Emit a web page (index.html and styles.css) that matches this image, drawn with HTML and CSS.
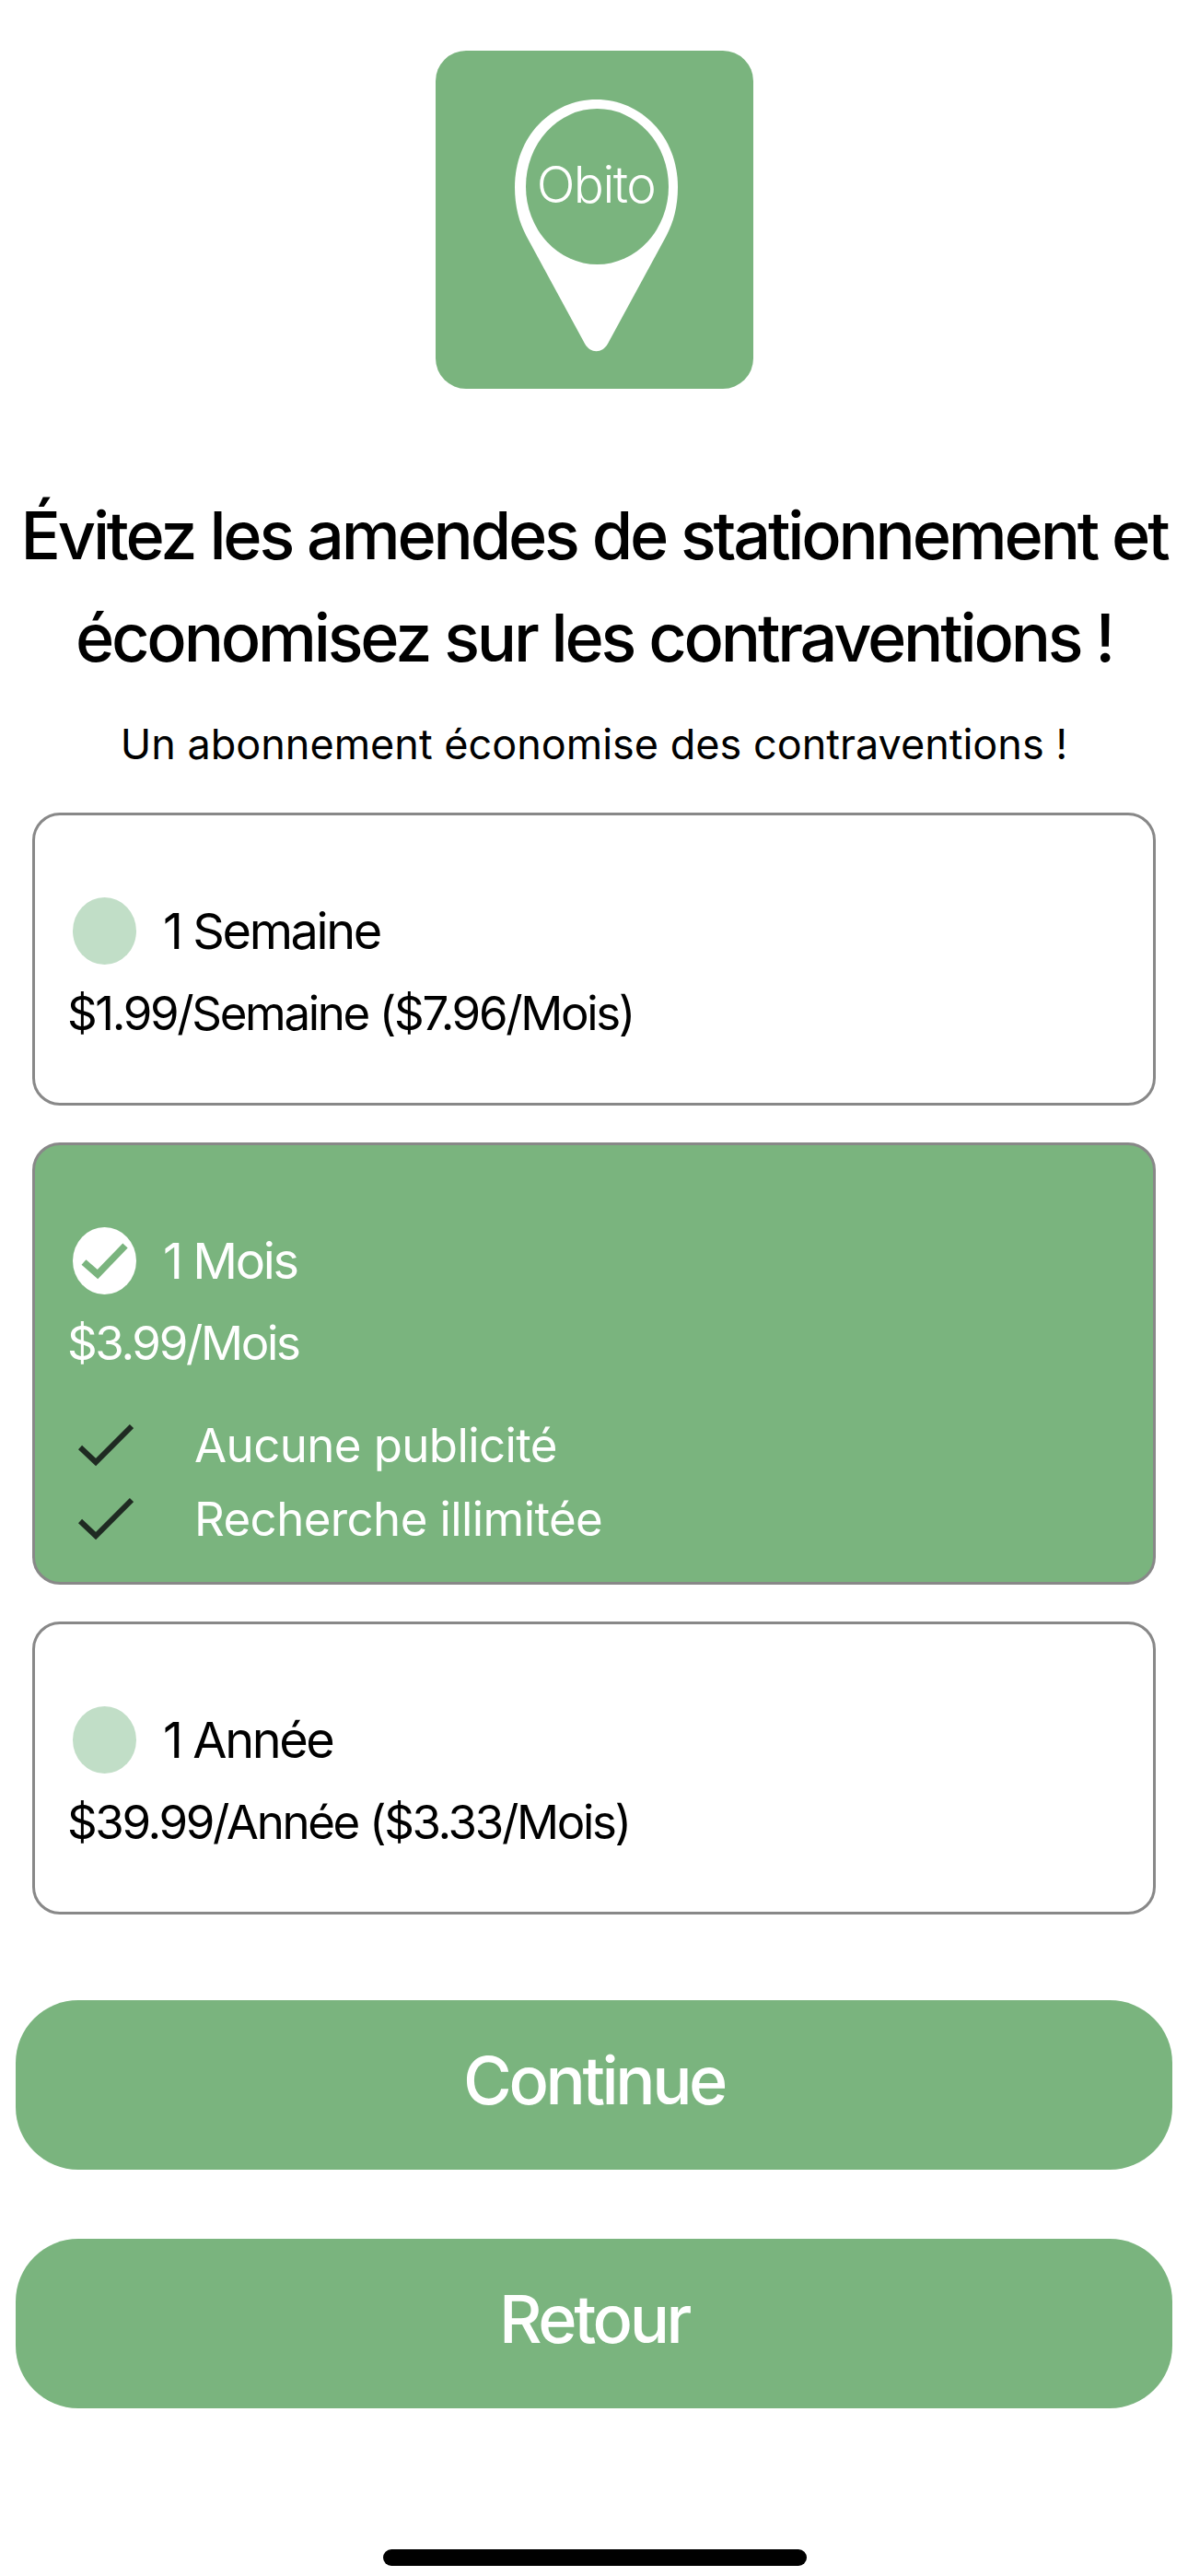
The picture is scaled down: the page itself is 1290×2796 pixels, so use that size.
FILE: index.html
```html
<!DOCTYPE html>
<html lang="fr">
<head>
    <meta charset="UTF-8">
    <meta name="viewport" content="width=device-width, initial-scale=1.0">
    <title>Obito - Abonnement</title>
    <link rel="stylesheet" href="styles.css">
</head>
<body>

    <div class="page">
        <svg class="logo" viewBox="0 0 345 367" width="345" height="367">
            <rect width="345" height="367" rx="33" fill="#7ab47e"/>
            <path fill="#fff" d="M174.5 53C223 53 263 93 263 148C263 170 258 187 250 202L187 318C181 329 168 329 162 318L99 202C91 187 86 170 86 148C86 93 126 53 174.5 53Z"/>
            <ellipse cx="175.5" cy="147.5" rx="77.5" ry="84.5" fill="#7ab47e"/>
            <text class="logo-text" x="174" y="165" text-anchor="middle">Obito</text>
        </svg>

        <h1 class="title">Évitez les amendes de stationnement et<br>économisez sur les contraventions !</h1>
        <p class="subtitle">Un abonnement économise des contraventions !</p>

        <div class="plans">
            <div class="plan">
                <div class="plan-head">
                    <span class="radio"></span>
                    <span>1 Semaine</span>
                </div>
                <div class="plan-price">$1.99/Semaine ($7.96/Mois)</div>
            </div>

            <div class="plan selected">
                <div class="plan-head">
                    <span class="radio">
                        <svg viewBox="0 0 69 73" width="69" height="73"><path d="M12 38L27 51L57 20" fill="none" stroke="#7ab47e" stroke-width="7.5"/></svg>
                    </span>
                    <span>1 Mois</span>
                </div>
                <div class="plan-price">$3.99/Mois</div>
                <ul class="features">
                    <li>
                        <svg viewBox="0 0 60 48" width="60" height="48"><path d="M2 27L19 43L58 4" fill="none" stroke="#1f2a22" stroke-width="6"/></svg>
                        <span>Aucune publicité</span>
                    </li>
                    <li>
                        <svg viewBox="0 0 60 48" width="60" height="48"><path d="M2 27L19 43L58 4" fill="none" stroke="#1f2a22" stroke-width="6"/></svg>
                        <span>Recherche illimitée</span>
                    </li>
                </ul>
            </div>

            <div class="plan">
                <div class="plan-head">
                    <span class="radio"></span>
                    <span>1 Année</span>
                </div>
                <div class="plan-price">$39.99/Année ($3.33/Mois)</div>
            </div>
        </div>

        <div class="actions">
            <button class="action">Continue</button>
            <button class="action">Retour</button>
        </div>
    </div>

    <div class="home-indicator"></div>

</body>
</html>
```

FILE: styles.css
```css
body {
    font-family: Inter, "Liberation Sans", sans-serif;
    margin: 0;
    background-color: #fff;
    color: #000;
}

.page {
    height: 2796px;
    box-sizing: border-box;
    padding-top: 55px;
    display: flex;
    flex-direction: column;
    align-items: center;
}

.logo {
    display: block;
    flex: none;
}

.logo-text {
    font-family: Inter, sans-serif;
    font-size: 55px;
    font-weight: 300;
    letter-spacing: -1.5px;
    fill: #fff;
}

.title {
    margin: 103px 0 0;
    font-size: 72px;
    font-weight: 500;
    letter-spacing: -3.2px;
    line-height: 111px;
    text-align: center;
    white-space: nowrap;
}

.subtitle {
    margin: 31px 0 0;
    font-size: 45px;
    line-height: 60px;
    text-align: center;
}

.plans {
    margin-top: 44px;
    width: 1220px;
    display: flex;
    flex-direction: column;
    gap: 40px;
}

.plan {
    box-sizing: border-box;
    height: 318px;
    padding: 88px 41px 0;
    border: 3px solid #888;
    border-radius: 30px;
}

.plan.selected {
    height: 480px;
    background-color: #7ab47e;
    color: #fff;
}

.plan-head {
    display: flex;
    align-items: center;
    gap: 29px;
    height: 74px;
    font-size: 54px;
    letter-spacing: -2.4px;
}

.radio {
    width: 69px;
    height: 73px;
    border-radius: 50%;
    background-color: #c1dec7;
    flex: none;
}

.selected .radio {
    background-color: #fff;
}

.radio svg {
    display: block;
}

.plan-price {
    margin: 23px 0 0 -6px;
    font-size: 51px;
    letter-spacing: -2.35px;
    line-height: 60px;
}

.features {
    list-style: none;
    margin: 50px 0 0;
    padding: 0;
    display: flex;
    flex-direction: column;
    gap: 20px;
    font-size: 51px;
    letter-spacing: -0.6px;
}

.features li {
    display: flex;
    align-items: center;
    gap: 66px;
    height: 60px;
    padding-left: 6px;
}

.actions {
    margin-top: 93px;
    width: 1256px;
    display: flex;
    flex-direction: column;
    gap: 75px;
}

.action {
    height: 184px;
    padding: 0 0 12px;
    border: none;
    border-radius: 68px;
    background-color: #7ab47e;
    color: #fff;
    font-family: inherit;
    font-size: 72px;
    font-weight: 500;
    letter-spacing: -3.4px;
}

.home-indicator {
    position: absolute;
    left: 416px;
    top: 2767px;
    width: 460px;
    height: 18px;
    border-radius: 9px;
    background-color: #000;
}
```
